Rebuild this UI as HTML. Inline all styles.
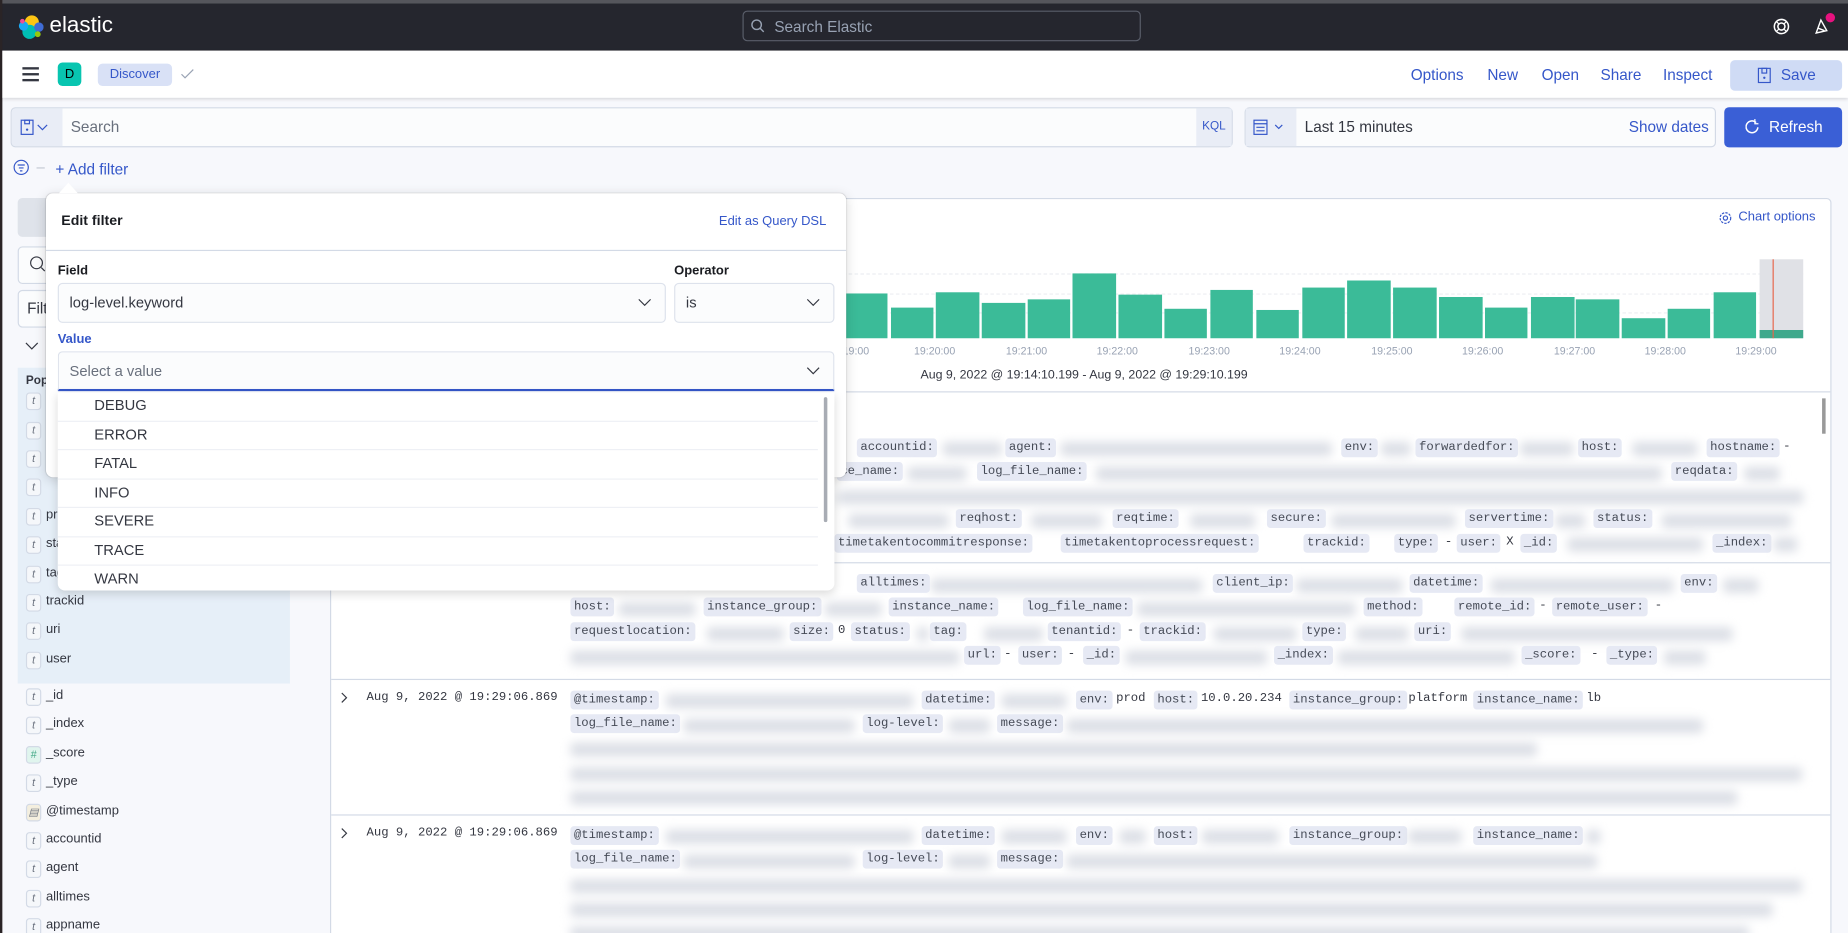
<!DOCTYPE html>
<html><head><meta charset="utf-8">
<style>
*{box-sizing:border-box;margin:0;padding:0}
html,body{width:1848px;height:933px;overflow:hidden;background:#f7f8fc}
#s{position:absolute;left:0;top:0;width:1568px;height:792px;transform:scale(1.17857);transform-origin:0 0;font-family:"Liberation Sans",sans-serif;color:#343741;background:#f7f8fc;overflow:hidden}
.a{position:absolute}
.lnk{color:#3557c9}
.m{font-family:"Liberation Mono",monospace;font-size:10.4px}
.p{position:absolute;font-family:"Liberation Mono",monospace;font-size:10.4px;background:#e6e9f4;border-radius:3px;padding:1px 3px;line-height:14px;color:#454a56;white-space:nowrap}
.v{position:absolute;font-family:"Liberation Mono",monospace;font-size:10.4px;line-height:16px;color:#343741;white-space:nowrap}
.bl{position:absolute;height:12px;background:#dcdfe6;filter:blur(4px);border-radius:3px}
.sb{position:absolute;left:22px;width:13px;height:15px;border:1px solid #d3dae6;border-radius:3px;background:#f5f7fa;font-size:9px;font-style:italic;text-align:center;line-height:13px;color:#69707d}
.sn{position:absolute;left:39px;font-size:11px;color:#343741}
.bar{position:absolute;background:#3bbb98;bottom:505px}
.xl{position:absolute;top:293px;font-size:9px;color:#98a2b3;width:60px;text-align:center}
.it{position:absolute;left:49px;width:645px;height:24.5px;border-bottom:1px solid #eef0f5;font-size:12.5px;padding-left:31px;line-height:22px;color:#343741}
</style></head><body><div id="s">
<div class="a" style="left:0;top:0;width:1568px;height:43px;background:#25262e;border-top:3px solid #55565c"></div>
<div class="a" style="left:0;top:0;width:2px;height:792px;background:#2a2426"></div>
<svg class="a" style="left:15px;top:12px" width="22" height="22" viewBox="0 0 22 22"><circle cx="12" cy="7" r="6" fill="#fec514"/><circle cx="10" cy="15" r="6" fill="#00bfb3"/><circle cx="5" cy="10" r="4" fill="#1ba9f5"/><circle cx="18" cy="11" r="4" fill="#3f6cd6"/><circle cx="4" cy="6" r="2" fill="#f04e98"/><circle cx="17" cy="17" r="2.5" fill="#93c90e"/></svg>
<div class="a" style="left:42px;top:11px;color:#fff;font-size:19px">elastic</div>
<div class="a" style="left:630px;top:9px;width:338px;height:26px;border:1px solid #5a5e6a;border-radius:4px;background:#25262e"></div>
<svg class="a" style="left:637px;top:16px" width="12" height="12" viewBox="0 0 12 12"><circle cx="5" cy="5" r="4" fill="none" stroke="#98a2b3" stroke-width="1.2"/><path d="M8 8l3 3" stroke="#98a2b3" stroke-width="1.2"/></svg>
<div class="a" style="left:657px;top:15px;color:#98a2b3;font-size:13px">Search Elastic</div>
<svg class="a" style="left:1504px;top:15px" width="15" height="15" viewBox="0 0 15 15"><circle cx="7.5" cy="7.5" r="6" fill="none" stroke="#fff" stroke-width="1.3"/><circle cx="7.5" cy="7.5" r="3" fill="none" stroke="#fff" stroke-width="1.3"/><path d="M3.3 3.3l2 2M11.7 3.3l-2 2M3.3 11.7l2-2M11.7 11.7l-2-2" stroke="#fff"/></svg>
<svg class="a" style="left:1538px;top:14px" width="16" height="16" viewBox="0 0 16 16"><path d="M3 14l4-11 5 9z M5 10l5 2" fill="none" stroke="#fff" stroke-width="1.2"/></svg>
<div class="a" style="left:1549px;top:11px;width:8px;height:8px;border-radius:50%;background:#e7127f"></div>
<div class="a" style="left:2px;top:43px;width:1566px;height:40px;background:#fff;box-shadow:0 1px 3px rgba(0,0,0,.15)"></div>
<div class="a" style="left:19px;top:57px;width:14px;height:2px;background:#343741;box-shadow:0 5px 0 #343741,0 10px 0 #343741"></div>
<div class="a" style="left:49px;top:53px;width:20px;height:20px;border-radius:4px;background:#08c5b0;font-size:11px;text-align:center;line-height:20px;color:#000">D</div>
<div class="a" style="left:83px;top:54px;width:63px;height:19px;border-radius:4px;background:#d9e1f6;font-size:11px;text-align:center;line-height:19px;color:#3557c9">Discover</div>
<svg class="a" style="left:153px;top:58px" width="12" height="10"><path d="M1 5l3 3 7-7" fill="none" stroke="#98a2b3"/></svg>
<div class="a lnk" style="left:1197px;top:56px;font-size:13px">Options</div>
<div class="a lnk" style="left:1262px;top:56px;font-size:13px">New</div>
<div class="a lnk" style="left:1308px;top:56px;font-size:13px">Open</div>
<div class="a lnk" style="left:1358px;top:56px;font-size:13px">Share</div>
<div class="a lnk" style="left:1411px;top:56px;font-size:13px">Inspect</div>
<div class="a" style="left:1468px;top:51px;width:95px;height:26px;border-radius:4px;background:#cfdbf5"></div>
<svg class="a" style="left:1491px;top:57px" width="12" height="14"><rect x="1" y="1" width="10" height="12" fill="none" stroke="#3557c9"/><rect x="4" y="1" width="4" height="4" fill="none" stroke="#3557c9"/><circle cx="6" cy="9" r="1" fill="#3557c9"/></svg>
<div class="a lnk" style="left:1511px;top:56px;font-size:13px">Save</div>
<div class="a" style="left:9px;top:91px;width:1037px;height:34px;border:1px solid #d3dae6;border-radius:4px;background:#fbfcfd"></div>
<div class="a" style="left:10px;top:92px;width:43px;height:32px;background:#e9edf6;border-radius:3px 0 0 3px"></div>
<svg class="a" style="left:17px;top:101px" width="24" height="14"><rect x="1" y="1" width="10" height="12" fill="none" stroke="#3557c9"/><rect x="4" y="1" width="4" height="3" fill="none" stroke="#3557c9"/><circle cx="6" cy="9" r="1" fill="#3557c9"/><path d="M15 5l4 4 4-4" fill="none" stroke="#3557c9"/></svg>
<div class="a" style="left:60px;top:100px;font-size:13px;color:#69707d">Search</div>
<div class="a" style="left:1015px;top:92px;width:30px;height:32px;background:#e9edf6;font-size:10px;text-align:center;line-height:32px;color:#3557c9">KQL</div>
<div class="a" style="left:1056px;top:91px;width:400px;height:34px;border:1px solid #d3dae6;border-radius:4px;background:#fbfcfd"></div>
<div class="a" style="left:1057px;top:92px;width:43px;height:32px;background:#e9edf6"></div>
<svg class="a" style="left:1063px;top:100px" width="30" height="16"><rect x="1" y="2" width="11" height="12" fill="none" stroke="#3557c9"/><path d="M1 5h11M3 8h7M3 11h7" stroke="#3557c9"/><path d="M19 6l3 3 3-3" fill="none" stroke="#3557c9"/></svg>
<div class="a" style="left:1107px;top:100px;font-size:13px;color:#343741">Last 15 minutes</div>
<div class="a lnk" style="left:1382px;top:100px;font-size:13px">Show dates</div>
<div class="a" style="left:1463px;top:91px;width:100px;height:34px;border-radius:4px;background:#3a5fd6"></div>
<svg class="a" style="left:1481px;top:101px" width="12" height="13"><path d="M9 3a5 5 0 1 0 1.5 4" fill="none" stroke="#fff" stroke-width="1.3"/><path d="M8 0v4h3" fill="none" stroke="#fff"/></svg>
<div class="a" style="left:1501px;top:100px;font-size:13px;color:#fff">Refresh</div>
<svg class="a" style="left:11px;top:135px" width="14" height="14"><circle cx="7" cy="7" r="6" fill="none" stroke="#3557c9"/><path d="M4 5h6M5 7.5h4M6 10h2" stroke="#3557c9"/></svg>
<div class="a" style="left:31px;top:142px;width:7px;height:1px;background:#c5cad4"></div>
<div class="a lnk" style="left:47px;top:136px;font-size:13px">+ Add filter</div>
<div class="a" style="left:15px;top:168px;width:250px;height:33px;background:#dfe3ea;border-radius:4px"></div>
<div class="a" style="left:15px;top:209px;width:250px;height:32px;border:1px solid #d3dae6;border-radius:4px;background:#fbfcfd"></div>
<svg class="a" style="left:25px;top:217px" width="14" height="14"><circle cx="6" cy="6" r="5" fill="none" stroke="#343741"/><path d="M10 10l3 3" stroke="#343741"/></svg>
<div class="a" style="left:15px;top:246px;width:250px;height:32px;border:1px solid #d3dae6;border-radius:4px;background:#fbfcfd"></div>
<div class="a" style="left:23px;top:254px;font-size:13px">Filter by name</div>
<svg class="a" style="left:21px;top:290px" width="12" height="8"><path d="M1 1l5 5 5-5" fill="none" stroke="#343741"/></svg>
<div class="a" style="left:15px;top:312px;width:231px;height:268px;background:#e6eff8"></div>
<div class="a" style="left:22px;top:318px;font-size:10px;font-weight:bold">Popular</div>
<div class="sb" style="top:333px">t</div><div class="sb" style="top:358px">t</div><div class="sb" style="top:382px">t</div><div class="sb" style="top:406px">t</div>
<div class="sb" style="top:431px">t</div><div class="sn" style="top:431px">project</div>
<div class="sb" style="top:455px">t</div><div class="sn" style="top:455px">status</div>
<div class="sb" style="top:480px">t</div><div class="sn" style="top:480px">tag</div>
<div class="sb" style="top:504px">t</div><div class="sn" style="top:504px">trackid</div>
<div class="sb" style="top:528px">t</div><div class="sn" style="top:528px">uri</div>
<div class="sb" style="top:553px">t</div><div class="sn" style="top:553px">user</div>
<div class="sb" style="top:584px">t</div><div class="sn" style="top:584px">_id</div>
<div class="sb" style="top:608px">t</div><div class="sn" style="top:608px">_index</div>
<div class="sb" style="top:633px;background:#e0f5ee;color:#4a8">#</div><div class="sn" style="top:633px">_score</div>
<div class="sb" style="top:657px">t</div><div class="sn" style="top:657px">_type</div>
<div class="sb" style="top:682px;background:#f4efdf">▤</div><div class="sn" style="top:682px">@timestamp</div>
<div class="sb" style="top:706px">t</div><div class="sn" style="top:706px">accountid</div>
<div class="sb" style="top:730px">t</div><div class="sn" style="top:730px">agent</div>
<div class="sb" style="top:755px">t</div><div class="sn" style="top:755px">alltimes</div>
<div class="sb" style="top:779px">t</div><div class="sn" style="top:779px">appname</div>
<div class="a" style="left:280px;top:168px;width:1274px;height:640px;background:#fff;border:1px solid #d3dae6;border-radius:4px"></div>
<svg class="a" style="left:1458px;top:179px" width="12" height="12"><circle cx="6" cy="6" r="4.5" fill="none" stroke="#3557c9" stroke-dasharray="2 1"/><circle cx="6" cy="6" r="1.8" fill="none" stroke="#3557c9"/></svg>
<div class="a lnk" style="left:1475px;top:178px;font-size:11px">Chart options</div>
<div class="a" style="left:700px;top:232px;width:830px;border-top:1px dashed #eceef2"></div>
<div class="a" style="left:700px;top:249px;width:830px;border-top:1px dashed #eceef2"></div>
<div class="a" style="left:700px;top:265px;width:830px;border-top:1px dashed #eceef2"></div>
<div class="a" style="left:1493px;top:220px;width:37px;height:67px;background:#e0e1e6"></div>
<div class="bar" style="left:717px;top:249px;width:36px"></div>
<div class="bar" style="left:756px;top:261px;width:36px"></div>
<div class="bar" style="left:794px;top:248px;width:37px"></div>
<div class="bar" style="left:833px;top:257px;width:37px"></div>
<div class="bar" style="left:872px;top:254px;width:36px"></div>
<div class="bar" style="left:910px;top:232px;width:37px"></div>
<div class="bar" style="left:949px;top:250px;width:37px"></div>
<div class="bar" style="left:988px;top:262px;width:36px"></div>
<div class="bar" style="left:1027px;top:246px;width:36px"></div>
<div class="bar" style="left:1066px;top:263px;width:36px"></div>
<div class="bar" style="left:1105px;top:244px;width:36px"></div>
<div class="bar" style="left:1143px;top:238px;width:37px"></div>
<div class="bar" style="left:1182px;top:244px;width:37px"></div>
<div class="bar" style="left:1221px;top:252px;width:37px"></div>
<div class="bar" style="left:1260px;top:261px;width:36px"></div>
<div class="bar" style="left:1299px;top:252px;width:37px"></div>
<div class="bar" style="left:1337px;top:254px;width:37px"></div>
<div class="bar" style="left:1376px;top:270px;width:37px"></div>
<div class="bar" style="left:1415px;top:262px;width:36px"></div>
<div class="bar" style="left:1454px;top:248px;width:36px"></div>
<div class="bar" style="left:1493px;top:280px;width:37px;background:#3fa98c"></div>
<div class="a" style="left:1504px;top:220px;width:1px;height:67px;background:#e7664c"></div>
<div class="xl" style="left:690px">19:19:00</div>
<div class="xl" style="left:763px">19:20:00</div><div class="xl" style="left:841px">19:21:00</div><div class="xl" style="left:918px">19:22:00</div><div class="xl" style="left:996px">19:23:00</div><div class="xl" style="left:1073px">19:24:00</div><div class="xl" style="left:1151px">19:25:00</div><div class="xl" style="left:1228px">19:26:00</div><div class="xl" style="left:1306px">19:27:00</div><div class="xl" style="left:1383px">19:28:00</div><div class="xl" style="left:1460px">19:29:00</div>
<div class="a" style="left:781px;top:312px;font-size:10.5px;color:#343741">Aug 9, 2022 @ 19:14:10.199 - Aug 9, 2022 @ 19:29:10.199</div>
<div class="a" style="left:281px;top:332px;width:1272px;height:1px;background:#d3dae6"></div>
<div class="a" style="left:1546px;top:338px;width:3px;height:30px;background:#999"></div>
<div class="a" style="left:281px;top:477px;width:1272px;height:1px;background:#d3dae6"></div>
<div class="a" style="left:281px;top:576px;width:1272px;height:1px;background:#d3dae6"></div>
<div class="a" style="left:281px;top:691px;width:1272px;height:1px;background:#d3dae6"></div>
<!-- row1 -->
<div class="bl" style="left:800px;top:375px;width:50px"></div><div class="bl" style="left:900px;top:375px;width:230px"></div><div class="bl" style="left:1172px;top:375px;width:25px"></div><div class="bl" style="left:1290px;top:375px;width:45px"></div><div class="bl" style="left:1385px;top:375px;width:55px"></div>
<div class="p" style="left:727px;top:372px">accountid:</div><div class="p" style="left:853px;top:372px">agent:</div><div class="p" style="left:1138px;top:372px">env:</div><div class="p" style="left:1201px;top:372px">forwardedfor:</div><div class="p" style="left:1339px;top:372px">host:</div><div class="p" style="left:1448px;top:372px">hostname:</div><div class="v" style="left:1513px;top:371px">-</div>
<div class="bl" style="left:770px;top:396px;width:50px"></div><div class="bl" style="left:930px;top:396px;width:480px"></div><div class="bl" style="left:1480px;top:396px;width:30px"></div>
<div class="p" style="left:710px;top:392px">ce_name:</div><div class="p" style="left:829px;top:392px">log_file_name:</div><div class="p" style="left:1418px;top:392px">reqdata:</div>
<div class="bl" style="left:710px;top:416px;width:820px"></div>
<div class="bl" style="left:720px;top:436px;width:85px"></div><div class="bl" style="left:875px;top:436px;width:60px"></div><div class="bl" style="left:1010px;top:436px;width:55px"></div><div class="bl" style="left:1130px;top:436px;width:105px"></div><div class="bl" style="left:1320px;top:436px;width:25px"></div><div class="bl" style="left:1410px;top:436px;width:110px"></div>
<div class="p" style="left:811px;top:432px">reqhost:</div><div class="p" style="left:944px;top:432px">reqtime:</div><div class="p" style="left:1075px;top:432px">secure:</div><div class="p" style="left:1243px;top:432px">servertime:</div><div class="p" style="left:1352px;top:432px">status:</div>
<div class="p" style="left:708px;top:453px">timetakentocommitresponse:</div><div class="p" style="left:900px;top:453px">timetakentoprocessrequest:</div><div class="p" style="left:1106px;top:453px">trackid:</div><div class="p" style="left:1183px;top:453px">type:</div><div class="v" style="left:1226px;top:452px">-</div><div class="p" style="left:1236px;top:453px">user:</div><div class="v" style="left:1278px;top:452px">X</div><div class="p" style="left:1290px;top:453px">_id:</div><div class="bl" style="left:1330px;top:456px;width:115px"></div><div class="p" style="left:1453px;top:453px">_index:</div><div class="bl" style="left:1505px;top:456px;width:20px"></div>
<!-- row2 -->
<div class="bl" style="left:790px;top:491px;width:230px"></div><div class="bl" style="left:1100px;top:491px;width:90px"></div><div class="bl" style="left:1265px;top:491px;width:155px"></div><div class="bl" style="left:1462px;top:491px;width:30px"></div>
<div class="p" style="left:727px;top:487px">alltimes:</div><div class="p" style="left:1029px;top:487px">client_ip:</div><div class="p" style="left:1196px;top:487px">datetime:</div><div class="p" style="left:1426px;top:487px">env:</div>
<div class="p" style="left:484px;top:507px">host:</div><div class="bl" style="left:525px;top:511px;width:65px"></div><div class="p" style="left:597px;top:507px">instance_group:</div><div class="bl" style="left:700px;top:511px;width:48px"></div><div class="p" style="left:754px;top:507px">instance_name:</div><div class="p" style="left:868px;top:507px">log_file_name:</div><div class="bl" style="left:965px;top:511px;width:185px"></div><div class="p" style="left:1157px;top:507px">method:</div><div class="p" style="left:1234px;top:507px">remote_id:</div><div class="v" style="left:1306px;top:506px">-</div><div class="p" style="left:1317px;top:507px">remote_user:</div><div class="v" style="left:1404px;top:506px">-</div>
<div class="p" style="left:484px;top:528px">requestlocation:</div><div class="bl" style="left:600px;top:532px;width:65px"></div><div class="p" style="left:670px;top:528px">size:</div><div class="v" style="left:711px;top:527px">0</div><div class="p" style="left:722px;top:528px">status:</div><div class="bl" style="left:778px;top:532px;width:10px"></div><div class="p" style="left:789px;top:528px">tag:</div><div class="bl" style="left:835px;top:532px;width:50px"></div><div class="p" style="left:889px;top:528px">tenantid:</div><div class="v" style="left:956px;top:527px">-</div><div class="p" style="left:967px;top:528px">trackid:</div><div class="bl" style="left:1030px;top:532px;width:70px"></div><div class="p" style="left:1105px;top:528px">type:</div><div class="bl" style="left:1150px;top:532px;width:45px"></div><div class="p" style="left:1200px;top:528px">uri:</div><div class="bl" style="left:1240px;top:532px;width:230px"></div>
<div class="bl" style="left:484px;top:552px;width:330px"></div><div class="p" style="left:818px;top:548px">url:</div><div class="v" style="left:852px;top:547px">-</div><div class="p" style="left:864px;top:548px">user:</div><div class="v" style="left:906px;top:547px">-</div><div class="p" style="left:919px;top:548px">_id:</div><div class="bl" style="left:955px;top:552px;width:120px"></div><div class="p" style="left:1081px;top:548px">_index:</div><div class="bl" style="left:1135px;top:552px;width:150px"></div><div class="p" style="left:1291px;top:548px">_score:</div><div class="v" style="left:1350px;top:547px">-</div><div class="p" style="left:1363px;top:548px">_type:</div><div class="bl" style="left:1412px;top:552px;width:35px"></div>
<!-- row3 -->
<svg class="a" style="left:289px;top:587px" width="7" height="10"><path d="M1 1l4 4-4 4" fill="none" stroke="#343741"/></svg>
<div class="a m" style="left:311px;top:586px">Aug 9, 2022 @ 19:29:06.869</div>
<div class="p" style="left:484px;top:586px">@timestamp:</div><div class="bl" style="left:565px;top:589px;width:210px"></div><div class="p" style="left:782px;top:586px">datetime:</div><div class="bl" style="left:850px;top:589px;width:55px"></div><div class="p" style="left:913px;top:586px">env:</div><div class="v" style="left:947px;top:585px">prod</div><div class="p" style="left:979px;top:586px">host:</div><div class="v" style="left:1019px;top:585px">10.0.20.234</div><div class="p" style="left:1094px;top:586px">instance_group:</div><div class="v" style="left:1195px;top:585px">platform</div><div class="p" style="left:1250px;top:586px">instance_name:</div><div class="v" style="left:1346px;top:585px">lb</div>
<div class="p" style="left:484px;top:606px">log_file_name:</div><div class="bl" style="left:580px;top:610px;width:145px"></div><div class="p" style="left:732px;top:606px">log-level:</div><div class="bl" style="left:805px;top:610px;width:35px"></div><div class="p" style="left:846px;top:606px">message:</div><div class="bl" style="left:905px;top:610px;width:540px"></div>
<div class="bl" style="left:484px;top:630px;width:820px"></div><div class="bl" style="left:484px;top:651px;width:1045px"></div><div class="bl" style="left:484px;top:671px;width:990px"></div>
<!-- row4 -->
<svg class="a" style="left:289px;top:702px" width="7" height="10"><path d="M1 1l4 4-4 4" fill="none" stroke="#343741"/></svg>
<div class="a m" style="left:311px;top:701px">Aug 9, 2022 @ 19:29:06.869</div>
<div class="p" style="left:484px;top:701px">@timestamp:</div><div class="bl" style="left:565px;top:704px;width:210px"></div><div class="p" style="left:782px;top:701px">datetime:</div><div class="bl" style="left:850px;top:704px;width:55px"></div><div class="p" style="left:913px;top:701px">env:</div><div class="bl" style="left:950px;top:704px;width:22px"></div><div class="p" style="left:979px;top:701px">host:</div><div class="bl" style="left:1020px;top:704px;width:65px"></div><div class="p" style="left:1094px;top:701px">instance_group:</div><div class="bl" style="left:1195px;top:704px;width:45px"></div><div class="p" style="left:1250px;top:701px">instance_name:</div><div class="bl" style="left:1346px;top:704px;width:12px"></div>
<div class="p" style="left:484px;top:721px">log_file_name:</div><div class="bl" style="left:580px;top:725px;width:145px"></div><div class="p" style="left:732px;top:721px">log-level:</div><div class="bl" style="left:805px;top:725px;width:35px"></div><div class="p" style="left:846px;top:721px">message:</div><div class="bl" style="left:905px;top:725px;width:450px"></div>
<div class="bl" style="left:484px;top:746px;width:1045px"></div><div class="bl" style="left:484px;top:766px;width:1020px"></div><div class="bl" style="left:484px;top:786px;width:1000px"></div>
<!-- popover -->
<div class="a" style="left:39px;top:164px;width:679px;height:241px;background:#fff;border-radius:6px;box-shadow:0 2px 10px rgba(0,0,0,.15),0 0 1px rgba(0,0,0,.2)"></div>
<div class="a" style="left:50px;top:155px;width:0;height:0;border-left:8px solid transparent;border-right:8px solid transparent;border-bottom:9px solid #fff"></div>
<div class="a" style="left:52px;top:180px;font-size:12px;font-weight:bold;color:#1a1c21">Edit filter</div>
<div class="a lnk" style="left:610px;top:182px;font-size:11px">Edit as Query DSL</div>
<div class="a" style="left:39px;top:212px;width:679px;height:1px;background:#d3dae6"></div>
<div class="a" style="left:49px;top:224px;font-size:11px;font-weight:bold;color:#1a1c21">Field</div>
<div class="a" style="left:572px;top:224px;font-size:11px;font-weight:bold;color:#1a1c21">Operator</div>
<div class="a" style="left:49px;top:240px;width:516px;height:34px;border:1px solid #dde2ec;border-radius:4px;background:#fbfcfd"></div>
<div class="a" style="left:59px;top:250px;font-size:12.5px">log-level.keyword</div>
<svg class="a" style="left:541px;top:253px" width="12" height="8"><path d="M1 1l5 5 5-5" fill="none" stroke="#343741"/></svg>
<div class="a" style="left:572px;top:240px;width:136px;height:34px;border:1px solid #dde2ec;border-radius:4px;background:#fbfcfd"></div>
<div class="a" style="left:582px;top:250px;font-size:12.5px">is</div>
<svg class="a" style="left:684px;top:253px" width="12" height="8"><path d="M1 1l5 5 5-5" fill="none" stroke="#343741"/></svg>
<div class="a lnk" style="left:49px;top:282px;font-size:11px;font-weight:bold">Value</div>
<div class="a" style="left:49px;top:298px;width:659px;height:34px;border:1px solid #dde2ec;border-bottom:2px solid #3557c9;border-radius:4px 4px 0 0;background:#fbfcfd"></div>
<div class="a" style="left:59px;top:308px;font-size:12.5px;color:#69707d">Select a value</div>
<svg class="a" style="left:684px;top:311px" width="12" height="8"><path d="M1 1l5 5 5-5" fill="none" stroke="#343741"/></svg>
<div class="a" style="left:49px;top:333px;width:659px;height:168px;background:#fff;border-radius:0 0 6px 6px;box-shadow:0 3px 8px rgba(0,0,0,.15)"></div>
<div class="it" style="top:333px">DEBUG</div>
<div class="it" style="top:357.5px">ERROR</div>
<div class="it" style="top:382px">FATAL</div>
<div class="it" style="top:406.5px">INFO</div>
<div class="it" style="top:431px">SEVERE</div>
<div class="it" style="top:455.5px">TRACE</div>
<div class="it" style="top:480px;border-bottom:none">WARN</div>
<div class="a" style="left:699px;top:337px;width:3px;height:106px;background:#a8acb4;border-radius:2px"></div>
</div></body></html>
